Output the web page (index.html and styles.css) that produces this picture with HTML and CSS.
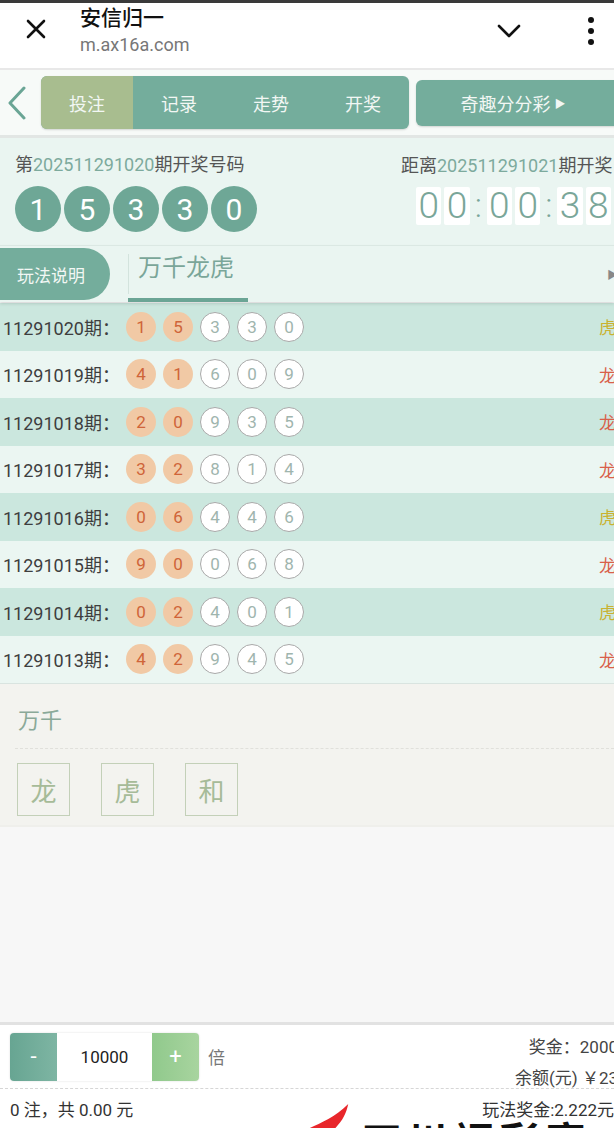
FILE: index.html
```html
<!DOCTYPE html>
<html lang="zh-CN">
<head>
    <meta charset="UTF-8">
    <meta name="viewport" content="width=device-width, initial-scale=1.0">
    <title>安信归一</title>
    <link rel="stylesheet" href="styles.css">
</head>
<body>
    <div class="top-strip"></div>
    <header class="browser-bar">
        <svg class="close-icon" width="22" height="22" viewBox="0 0 22 22"><path d="M3 3L19 19M19 3L3 19" stroke="#111" stroke-width="2.6" stroke-linecap="round"/></svg>
        <div class="site">
            <div class="site-title">安信归一</div>
            <div class="site-url">m.ax16a.com</div>
        </div>
        <svg class="chevron-icon" width="24" height="14" viewBox="0 0 24 14"><path d="M2 2L12 12L22 2" fill="none" stroke="#111" stroke-width="2.6" stroke-linecap="round" stroke-linejoin="round"/></svg>
        <svg class="dots-icon" width="8" height="28" viewBox="0 0 8 28"><circle cx="4" cy="3" r="3" fill="#111"/><circle cx="4" cy="14" r="3" fill="#111"/><circle cx="4" cy="25" r="3" fill="#111"/></svg>
    </header>

    <nav class="nav">
        <svg class="back-icon" width="20" height="34" viewBox="0 0 20 34"><path d="M17 2L3 17L17 32" fill="none" stroke="#6aa595" stroke-width="3" stroke-linecap="round" stroke-linejoin="round"/></svg>
        <div class="segments">
            <span class="seg active">投注</span>
            <span class="seg">记录</span>
            <span class="seg">走势</span>
            <span class="seg">开奖</span>
        </div>
        <div class="game-btn">奇趣分分彩 <span class="tri">▶</span></div>
    </nav>

    <section class="draw">
        <div class="draw-left">
            <div class="draw-label">第<span class="num">202511291020</span>期开奖号码</div>
            <div class="big-balls">
                <span class="big-ball">1</span>
                <span class="big-ball">5</span>
                <span class="big-ball">3</span>
                <span class="big-ball">3</span>
                <span class="big-ball">0</span>
            </div>
        </div>
        <div class="draw-right">
            <div class="draw-label">距离<span class="num">202511291021</span>期开奖</div>
            <div class="countdown">
                <span class="digit">0</span><span class="digit">0</span><span class="colon">:</span><span class="digit">0</span><span class="digit">0</span><span class="colon">:</span><span class="digit">3</span><span class="digit">8</span>
            </div>
        </div>
    </section>

    <div class="tabs">
        <div class="rule-btn">玩法说明</div>
        <div class="tab-sep"></div>
        <div class="tab active">万千龙虎</div>
        <span class="tab-arrow">▶</span>
    </div>

    <div class="history" id="history"></div>

    <section class="pick">
        <div class="pick-title">万千</div>
        <div class="pick-opts">
            <span class="opt">龙</span>
            <span class="opt">虎</span>
            <span class="opt">和</span>
        </div>
    </section>

    <div class="blank"></div>

    <footer class="bet-bar">
        <div class="bet-top">
            <div class="stepper">
                <span class="step minus">-</span>
                <span class="step-value">10000</span>
                <span class="step plus">+</span>
            </div>
            <span class="times">倍</span>
            <div class="money">
                <div>奖金：2000</div>
                <div>余额(元) ￥23</div>
            </div>
        </div>
        <div class="bet-bottom">
            <span>0 注，共 0.00 元</span>
            <span>玩法奖金:2.222元</span>
        </div>
        <div class="watermark">
            <svg width="50" height="26" viewBox="0 0 50 26"><path d="M2 26C14 21 30 14 44 0C42 10 38 18 30 26Z" fill="#e8262b"/></svg>
            <span class="wm-text">四川福彩官方</span>
        </div>
    </footer>

<script>
    // recent draws: period, numbers, result
    const draws = [
        ['11291020', [1, 5, 3, 3, 0], '虎'],
        ['11291019', [4, 1, 6, 0, 9], '龙'],
        ['11291018', [2, 0, 9, 3, 5], '龙'],
        ['11291017', [3, 2, 8, 1, 4], '龙'],
        ['11291016', [0, 6, 4, 4, 6], '虎'],
        ['11291015', [9, 0, 0, 6, 8], '龙'],
        ['11291014', [0, 2, 4, 0, 1], '虎'],
        ['11291013', [4, 2, 9, 4, 5], '龙']
    ];

    const history = document.getElementById('history');
    draws.forEach(d => {
        const row = document.createElement('div');
        row.classList.add('row');
        const balls = d[1].map((n, i) =>
            `<span class="ball ${i < 2 ? 'hot' : ''}">${n}</span>`).join('');
        row.innerHTML = `
            <span class="period">${d[0]}期：</span>
            <span class="balls">${balls}</span>
            <span class="result ${d[2] === '龙' ? 'dragon' : 'tiger'}">${d[2]}</span>
        `;
        history.appendChild(row);
    });
</script>
</body>
</html>
```

FILE: styles.css
```css
* {
    box-sizing: border-box;
}
body {
    margin: 0;
    width: 614px;
    height: 1128px;
    overflow: hidden;
    display: flex;
    flex-direction: column;
    font-family: Roboto, "Noto Sans CJK SC", sans-serif;
    background-color: #f7f7f7;
}
.top-strip {
    height: 3px;
    background: #3a3a3a;
}
.browser-bar {
    height: 67px;
    background: #fff;
    border-bottom: 2px solid #e8e8e8;
    display: flex;
    align-items: center;
}
.close-icon {
    margin-left: 25px;
    margin-top: -14px;
}
.site {
    margin-left: 33px;
    flex: 1;
    margin-top: -10px;
}
.site-title {
    font-size: 21px;
    font-weight: 500;
    color: #111;
    line-height: 24px;
}
.site-url {
    font-size: 18px;
    color: #777;
    line-height: 22px;
    margin-top: 4px;
}
.chevron-icon {
    margin-right: 66px;
    margin-top: -10px;
}
.dots-icon {
    margin-right: 19px;
    margin-top: -10px;
}

.nav {
    height: 68px;
    background: #f7faf8;
    display: flex;
    align-items: center;
    border-bottom: 3px solid #e2e6e4;
    overflow: hidden;
}
.back-icon {
    flex-shrink: 0;
    margin-left: 7px;
    margin-right: 14px;
}
.segments {
    display: flex;
    flex-shrink: 0;
    width: 368px;
    height: 53px;
    border-radius: 6px;
    overflow: hidden;
    background: #74ad9c;
    box-shadow: 0 1px 2px rgba(0, 0, 0, 0.15);
}
.seg {
    flex: 1;
    display: flex;
    align-items: center;
    justify-content: center;
    color: #f2f7f4;
    font-size: 18px;
}
.seg.active {
    background: #a8bd8f;
}
.game-btn {
    margin-left: 7px;
    width: 210px;
    flex-shrink: 0;
    height: 46px;
    border-radius: 6px;
    background: #74ad9c;
    color: #f2f7f4;
    font-size: 18px;
    display: flex;
    align-items: center;
    justify-content: center;
    padding-right: 16px;
    box-shadow: 0 1px 2px rgba(0, 0, 0, 0.15);
}
.tri {
    font-size: 11px;
    margin-left: 4px;
}

.draw {
    height: 107px;
    background: #eaf5f1;
    display: flex;
    justify-content: space-between;
    padding-top: 16px;
}
.draw-label {
    font-size: 18px;
    color: #555;
    line-height: 22px;
    white-space: nowrap;
}
.draw-label .num {
    color: #7daa9d;
}
.draw-left {
    padding-left: 15px;
}
.big-balls {
    display: flex;
    gap: 3px;
    margin-top: 10px;
}
.big-ball {
    width: 46px;
    height: 46px;
    border-radius: 50%;
    background: #6ea796;
    color: #fff;
    font-size: 30px;
    display: flex;
    align-items: center;
    justify-content: center;
}
.draw-right {
    width: 213px;
    padding-top: 1px;
}
.countdown {
    display: flex;
    margin-top: 10px;
    margin-left: 15px;
}
.digit {
    width: 26px;
    height: 38px;
    margin-right: 3px;
    background: #fff;
    border-radius: 2px;
    color: #7aa699;
    font-size: 37px;
    font-weight: 300;
    line-height: 38px;
    text-align: center;
}
.colon {
    width: 11px;
    margin-right: 3px;
    color: #7aa699;
    font-size: 34px;
    font-weight: 300;
    line-height: 36px;
    text-align: center;
}

.tabs {
    height: 57px;
    background: #eaf5f1;
    border-top: 1px solid #dbe8e3;
    display: flex;
    align-items: center;
    position: relative;
    box-shadow: 0 2px 3px rgba(0, 0, 0, 0.12);
    z-index: 1;
}
.rule-btn {
    width: 110px;
    height: 52px;
    background: #74ad9c;
    border-radius: 0 26px 26px 0;
    color: #f2f7f4;
    font-size: 17px;
    display: flex;
    align-items: center;
    padding-left: 17px;
}
.tab-sep {
    width: 1px;
    height: 40px;
    margin-left: 18px;
    background: #d3e3dd;
}
.tab {
    width: 120px;
    height: 100%;
    margin-left: -1px;
    padding-left: 10px;
    font-size: 24px;
    color: #7aa699;
    line-height: 44px;
}
.tab.active {
    border-bottom: 4px solid #6ba595;
}
.tab-arrow {
    margin-left: auto;
    margin-right: -4px;
    font-size: 11px;
    color: #888;
}

.history {
    padding-top: 1px;
    border-bottom: 1px solid #d9e4e0;
}
.row {
    height: 47.5px;
    display: flex;
    align-items: center;
    background: #ebf6f2;
    padding-left: 3px;
}
.row:nth-child(odd) {
    background: #cbe7de;
}
.period {
    width: 123px;
    font-size: 18px;
    color: #3e3e3e;
    white-space: nowrap;
}
.balls {
    display: flex;
    gap: 7px;
    flex: 1;
}
.ball {
    width: 30px;
    height: 30px;
    border-radius: 50%;
    border: 1.5px solid #a9a9a9;
    background: #fff;
    color: #9fb5ae;
    font-size: 17px;
    display: flex;
    align-items: center;
    justify-content: center;
}
.ball.hot {
    border: none;
    background: #f1c9a5;
    color: #cf6439;
}
.result {
    font-size: 17px;
    margin-right: -2px;
}
.result.dragon {
    color: #d9604a;
}
.result.tiger {
    color: #c9b232;
}

.pick {
    height: 143px;
    background: #f3f3ef;
    padding: 22px 0 0 15px;
    border-bottom: 2px solid #efefeb;
}
.pick-title {
    font-size: 22px;
    color: #8aa998;
    padding-left: 3px;
    line-height: 30px;
    padding-bottom: 12px;
    border-bottom: 1px dashed #e0e0db;
}
.pick-opts {
    display: flex;
    gap: 31px;
    margin-top: 14px;
    padding-left: 2px;
}
.opt {
    width: 53px;
    height: 53px;
    border: 1.5px solid #c3d0b8;
    color: #a6bb98;
    font-size: 26px;
    display: flex;
    align-items: center;
    justify-content: center;
}

.blank {
    flex: 1;
    background: #f7f7f7;
}

.bet-bar {
    height: 106px;
    background: #fff;
    border-top: 3px solid #e2e2e2;
    position: relative;
    overflow: hidden;
}
.bet-top {
    display: flex;
    align-items: center;
    height: 64px;
    padding-left: 10px;
    border-bottom: 1px dashed #d6d6d6;
}
.stepper {
    display: flex;
    flex-shrink: 0;
    width: 189px;
    height: 48px;
    border-radius: 4px;
    overflow: hidden;
    box-shadow: 0 0 2px rgba(0, 0, 0, 0.15);
}
.step {
    width: 47px;
    display: flex;
    align-items: center;
    justify-content: center;
    color: #fff;
    font-size: 22px;
}
.step.minus {
    background: linear-gradient(90deg, #67a592, #7eb5a3);
}
.step.plus {
    background: linear-gradient(90deg, #90c98c, #a8d49f);
}
.step-value {
    flex: 1;
    display: flex;
    align-items: center;
    justify-content: center;
    font-size: 17px;
    color: #222;
}
.times {
    margin-left: 9px;
    font-size: 17px;
    color: #777;
}
.money {
    margin-left: auto;
    margin-right: -4px;
    text-align: right;
    font-size: 17px;
    color: #444;
    line-height: 31px;
    margin-top: 12px;
    white-space: nowrap;
}
.bet-bottom {
    display: flex;
    justify-content: space-between;
    padding: 7px 0 0 10px;
    font-size: 17px;
    color: #333;
}
.watermark {
    position: absolute;
    left: 308px;
    top: 78px;
    display: flex;
    align-items: flex-start;
}
.wm-text {
    font-size: 40px;
    font-weight: 700;
    color: #111;
    line-height: 40px;
    margin-top: 20px;
    margin-left: 8px;
    letter-spacing: 6px;
}
```
